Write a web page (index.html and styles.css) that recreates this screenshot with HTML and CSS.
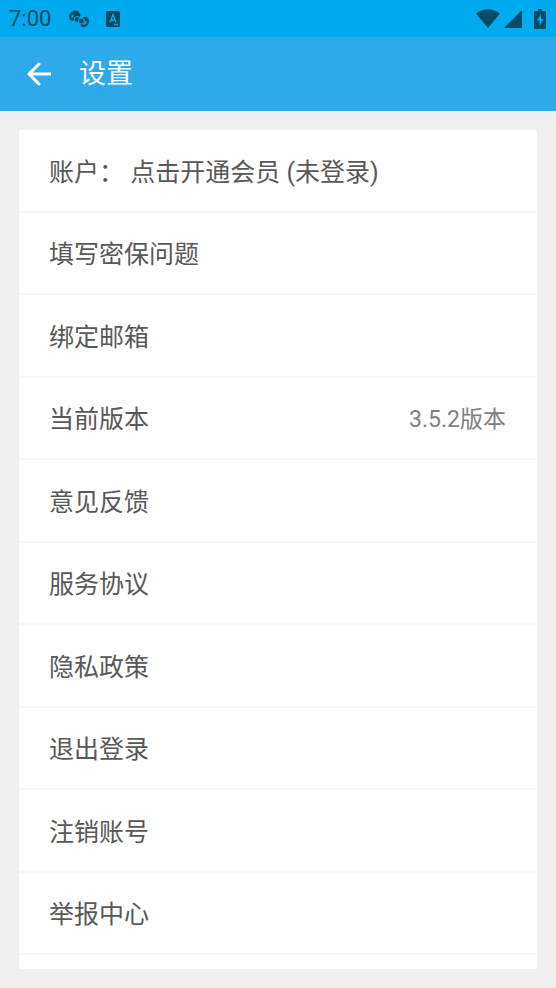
FILE: index.html
```html
<!DOCTYPE html>
<html lang="zh-CN">
<head>
<meta charset="utf-8">
<meta name="viewport" content="width=device-width, initial-scale=1">
<title>设置</title>
<link rel="stylesheet" href="styles.css">
</head>
<body>
<div class="status">
  <span class="time">7:00</span>
  <svg class="knot" width="20" height="18" viewBox="0 0 20 18" aria-hidden="true">
    <path fill="currentColor" d="M0 7C0 3 3 .5 6.500 .5S11 3 11.500 6L7.500 11 2 10.500Q0 9.500 0 7z"/>
    <path fill="currentColor" d="M13 8c3-2 7-1 7 2.500 0 4-2.500 6.500-5.500 6.500-2 0-3-1-3-2.500z"/>
    <circle class="bead" cx="8" cy="9.500" r="3"/>
    <circle class="bead" cx="12.500" cy="11" r="3"/>
    <path class="cut" d="M2.500 7.500Q4 6.500 4.500 4.500M14.500 14.500Q17 13.500 17 11"/>
  </svg>
  <svg class="letter" width="14" height="16" viewBox="0 0 14 16" aria-hidden="true">
    <rect width="14" height="16" rx="1.500" fill="currentColor"/>
    <path class="cut" d="M4 11.500L7 3.500l3 8M5 9h4M8 13.500h4"/>
  </svg>
  <svg class="wifi" width="24" height="19" viewBox="0 0 24 19" aria-hidden="true">
    <path fill="currentColor" d="M0 4.500Q12-4 24 4.500L12 19z"/>
  </svg>
  <svg class="signal" width="18" height="18" viewBox="0 0 18 18" aria-hidden="true">
    <path fill="currentColor" d="M18 0v18H0z"/>
  </svg>
  <svg width="12" height="20" viewBox="0 0 12 20" aria-hidden="true">
    <path fill="currentColor" d="M4 0h4v2h3q1 0 1 1v16q0 1-1 1H1q-1 0-1-1V3q0-1 1-1h3z"/>
    <path fill="#00aaee" d="M7 5L3 11.500h2.500V17L9.500 10H7z"/>
  </svg>
</div>
<header class="bar">
  <button class="back" type="button" aria-label="返回">
    <svg width="24" height="24" viewBox="0 0 24 24" aria-hidden="true">
      <path d="M12 2L2 12l10 10M2 12h21"/>
    </svg>
  </button>
  <h1>设置</h1>
</header>
<main>
  <ul class="list">
    <li><a href="#account"><span>账户： 点击开通会员 (未登录)</span></a></li>
    <li><a href="#question">填写密保问题</a></li>
    <li><a href="#email">绑定邮箱</a></li>
    <li><a href="#version"><span>当前版本</span><span class="value">3.5.2版本</span></a></li>
    <li><a href="#feedback">意见反馈</a></li>
    <li><a href="#terms">服务协议</a></li>
    <li><a href="#privacy">隐私政策</a></li>
    <li><a href="#logout">退出登录</a></li>
    <li><a href="#close">注销账号</a></li>
    <li><a href="#report">举报中心</a></li>
  </ul>
</main>
</body>
</html>
```
FILE: styles.css
```css
* {
  box-sizing: border-box;
}

body {
  display: flex;
  flex-direction: column;
  min-height: 100vh;
  margin: 0;
  background: #f0f0f0;
  color: #585858;
  font-family: Roboto, "Noto Sans CJK SC", sans-serif;
}

.status {
  display: flex;
  align-items: center;
  height: 37px;
  padding: 0 10px 0 9px;
  background: #00aaee;
  color: #064b66;
}

.time {
  font-size: 22px;
  line-height: 36px;
}

.knot {
  margin-left: 18px;
}

.letter {
  margin-left: 17px;
}

.cut {
  fill: none;
  stroke: #00aaee;
  stroke-width: 1.4;
}

.bead {
  fill: currentColor;
  stroke: #00aaee;
  stroke-width: 1;
}

.wifi {
  margin-left: auto;
}

.signal {
  margin: 0 12px 0 4px;
}

.bar {
  display: flex;
  align-items: center;
  gap: 28px;
  height: 74px;
  padding: 0 27px;
  background: #2ea9ea;
  color: #fff;
}

.back {
  display: flex;
  padding: 0;
  border: 0;
  background: none;
  color: inherit;
}

.back path {
  fill: none;
  stroke: currentColor;
  stroke-width: 3;
  stroke-linecap: round;
  stroke-linejoin: round;
}

h1 {
  margin: 0;
  font-size: 27px;
  font-weight: 400;
  line-height: 40px;
}

main {
  display: flex;
  flex: 1;
  padding: 19px;
}

.list {
  display: grid;
  flex: 1;
  grid-auto-rows: 1fr;
  margin: 0;
  padding: 0 0 14px;
  border-radius: 2px;
  background: #fff;
  list-style: none;
}

.list li {
  display: flex;
  border-bottom: 2px solid #f7f7f7;
}

.list a {
  display: flex;
  flex: 1;
  align-items: center;
  justify-content: space-between;
  padding: 5px 31px 0 30px;
  color: inherit;
  font-size: 25px;
  line-height: 36px;
  text-decoration: none;
}

.list .value {
  color: #808080;
  font-size: 23px;
}
```
